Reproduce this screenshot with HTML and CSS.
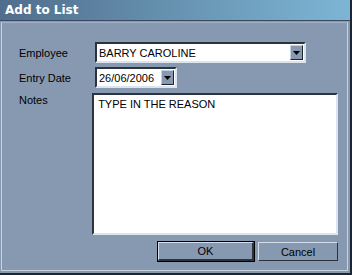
FILE: index.html
```html
<!DOCTYPE html>
<html lang="en">
<head>
    <meta charset="UTF-8">
    <title>Add to List</title>
    <link rel="stylesheet" href="styles.css">
</head>
<body>
    <div class="window">
        <div class="titlebar">Add to List</div>
        <div class="frame">
            <div class="form">
                <div class="row">
                    <label class="lbl">Employee</label>
                    <div class="combo employee">
                        <span class="value">BARRY CAROLINE</span>
                        <span class="drop"><svg width="7" height="4" viewBox="0 0 7 4"><path d="M0 0h7L3.5 4z" fill="#000"/></svg></span>
                    </div>
                </div>
                <div class="row">
                    <label class="lbl">Entry Date</label>
                    <div class="combo date">
                        <span class="value">26/06/2006</span>
                        <span class="drop"><svg width="7" height="4" viewBox="0 0 7 4"><path d="M0 0h7L3.5 4z" fill="#000"/></svg></span>
                    </div>
                </div>
                <div class="row notes-row">
                    <label class="lbl">Notes</label>
                    <div class="notes">TYPE IN THE REASON</div>
                </div>
                <div class="buttons">
                    <button class="btn default">OK</button>
                    <button class="btn">Cancel</button>
                </div>
            </div>
        </div>
    </div>
</body>
</html>
```

FILE: styles.css
```css
body {
    margin: 0;
    padding: 0;
    font-family: Tahoma, "Liberation Sans", sans-serif;
    font-size: 11px;
    color: #000;
    background-color: #8799b1;
}
.window {
    width: 352px;
    height: 275px;
    box-sizing: border-box;
    border-right: 2px solid #1c2530;
    border-bottom: 2px solid #1c2530;
    background-color: #8799b1;
    display: flex;
    flex-direction: column;
}
.titlebar {
    height: 20px;
    line-height: 20px;
    padding-left: 5px;
    color: #fff;
    font-family: "DejaVu Sans", sans-serif;
    font-weight: bold;
    font-size: 12px;
    background: linear-gradient(to right, #506d8c, #6b9ab8 60%, #7db5d4);
    border-bottom: 1px solid #3c4c60;
}
.frame {
    flex: 1;
    margin: 1px 2px 2px 1px;
    border-left: 1px solid #c6d2e0;
    border-top: 1px solid #9fb0c6;
    border-right: 1px solid #c6d2e0;
    border-bottom: 1px solid #c6d2e0;
}
.form {
    padding: 19px 9px 0 17px;
    display: flex;
    flex-direction: column;
    gap: 4px;
}
.row {
    display: flex;
    align-items: center;
}
.notes-row {
    align-items: flex-start;
}
.lbl {
    width: 76px;
    padding-top: 1px;
}
.notes-row .lbl {
    padding-top: 2px;
}
.combo {
    height: 17px;
    background-color: #fff;
    border: 2px solid;
    border-color: #2a3440 #dde4ee #dde4ee #2a3440;
    display: flex;
    align-items: center;
    justify-content: space-between;
}
.employee {
    width: 207px;
}
.date {
    width: 78px;
}
.value {
    padding-left: 2px;
}
.drop {
    width: 13px;
    height: 15px;
    box-sizing: border-box;
    margin-right: 1px;
    background-color: #8799b1;
    border: 1px solid;
    border-color: #c6d2e0 #1c2530 #1c2530 #c6d2e0;
    display: flex;
    align-items: center;
    justify-content: center;
}
.notes {
    width: 243px;
    height: 132px;
    padding: 3px 4px;
    box-sizing: content-box;
    background-color: #fff;
    border: 2px solid;
    border-color: #2a3440 #dde4ee #dde4ee #2a3440;
    margin-top: 1px;
}
.buttons {
    display: flex;
    justify-content: flex-end;
    gap: 4px;
    margin-top: 3px;
    padding-right: 0;
}
.btn {
    height: 19px;
    font-family: Tahoma, "Liberation Sans", sans-serif;
    font-size: 11px;
    color: #000;
    background-color: #8799b1;
    border: 1px solid;
    border-color: #d4dde8 #2a3440 #2a3440 #d4dde8;
    padding: 0;
}
.btn.default {
    width: 96px;
    outline: 1px solid #000;
    outline-offset: 0;
    border-right-width: 2px;
    border-bottom-width: 2px;
}
.btn:not(.default) {
    width: 80px;
}
```
